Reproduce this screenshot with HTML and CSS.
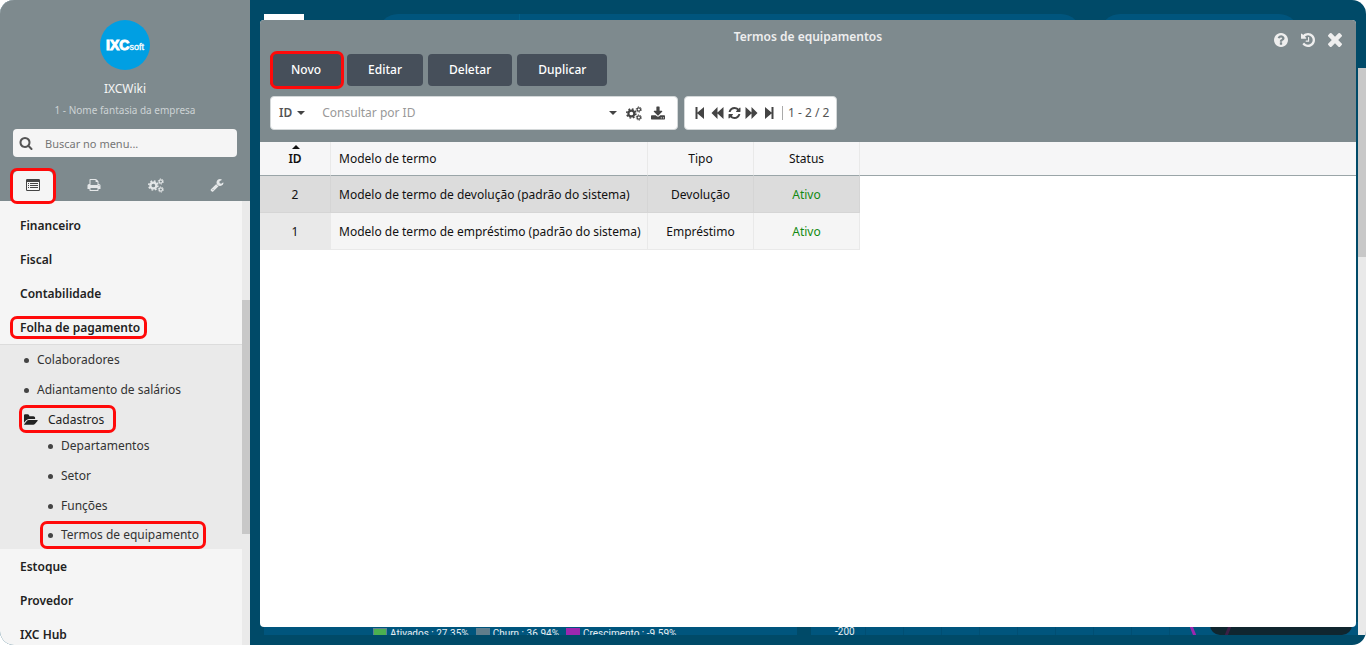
FILE: index.html
```html
<!DOCTYPE html>
<html lang="pt-BR">
<head>
<meta charset="utf-8">
<title>Termos de equipamentos</title>
<link rel="stylesheet" href="styles.css">
</head>
<body>
<svg class="sprite" aria-hidden="true">
  <symbol id="search" viewBox="0 0 1792 1792"><path d="M1216 832q0-185-131.500-316.500t-316.500-131.500-316.500 131.500-131.500 316.500 131.500 316.500 316.500 131.500 316.500-131.500 131.500-316.500zm512 832q0 52-38 90t-90 38q-54 0-90-38l-343-342q-179 124-399 124-143 0-273.500-55.500t-225-150-150-225-55.500-273.500 55.500-273.500 150-225 225-150 273.500-55.500 273.500 55.500 225 150 150 225 55.500 273.500q0 220-124 399l343 343q37 37 37 90z"/></symbol>
  <symbol id="list" viewBox="0 0 14 12"><path fill-rule="evenodd" d="M1.200 0h11.600Q14 0 14 1.200v9.600q0 1.200-1.200 1.200H1.200Q0 12 0 10.800V1.200Q0 0 1.200 0zM1 3v7.500q0 .5.500.500h11q.5 0 .5-.5V3z"/><path d="M2 4h1v1H2zM4 4h8v1H4zM2 6h1v1H2zM4 6h8v1H4zM2 8h1v1H2zM4 8h8v1H4z"/></symbol>
  <symbol id="print" viewBox="0 0 1792 1792"><path d="M448 1536h896v-256h-896v256zm0-640h896v-384h-160q-40 0-68-28t-28-68v-160h-640v640zm1152 64q0-26-19-45t-45-19-45 19-19 45 19 45 45 19 45-19 19-45zm128 0v416q0 13-9.500 22.500t-22.500 9.500h-224v160q0 40-28 68t-68 28h-960q-40 0-68-28t-28-68v-160h-224q-13 0-22.500-9.500t-9.500-22.500v-416q0-79 56.500-135.500t135.500-56.500h64v-544q0-40 28-68t68-28h672q40 0 88 20t76 48l152 152q28 28 48 76t20 88v256h64q79 0 135.500 56.500t56.500 135.500z"/></symbol>
  <symbol id="cogs" viewBox="0 0 30 28"><g fill="none" stroke="currentColor"><circle cx="10" cy="14" r="5.500" stroke-width="4"/><circle cx="10" cy="14" r="8.500" stroke-width="3" stroke-dasharray="3.340 3.340"/><circle cx="24" cy="6.500" r="3.200" stroke-width="2.200"/><circle cx="24" cy="6.500" r="4.900" stroke-width="1.800" stroke-dasharray="2.560 2.560"/><circle cx="24" cy="21.500" r="3.200" stroke-width="2.200"/><circle cx="24" cy="21.500" r="4.900" stroke-width="1.800" stroke-dasharray="2.560 2.560"/></g></symbol>
  <symbol id="wrench" viewBox="0 0 1792 1792"><path d="M448 1472q0-26-19-45t-45-19-45 19-19 45 19 45 45 19 45-19 19-45zm644-420l-682 682q-37 37-90 37-52 0-91-37l-106-108q-38-36-38-90 0-53 38-91l681-681q39 98 114.500 173.500t173.500 114.500zm634-435q0 39-23 106-47 134-164.500 217.500t-258.500 83.500q-185 0-316.500-131.500t-131.500-316.500 131.500-316.500 316.500-131.500q58 0 121.500 16.500t107.500 46.500q16 11 16 28t-16 28l-293 169v224l193 107q5-3 79-48.500t135.500-81 70.500-35.500q15 0 23.500 10t8.500 25z"/></symbol>
  <symbol id="folder" viewBox="0 128 1856 1536"><path d="M1815 952q0 31-31 66l-336 396q-43 51-120.500 86.500t-143.500 35.500h-1088q-34 0-60.500-13t-26.500-43q0-31 31-66l336-396q43-51 120.500-86.500t143.500-35.500h1088q34 0 60.500 13t26.500 43zm-343-344v160h-832q-94 0-197 47.500t-164 119.500l-337 396-5 6q0-4-.5-12.500t-.5-12.500v-960q0-92 66-158t158-66h320q92 0 158 66t66 158v32h544q92 0 158 66t66 158z"/></symbol>
  <symbol id="help" viewBox="128 128 1536 1536"><path d="M1024 1376v-192q0-14-9-23t-23-9h-192q-14 0-23 9t-9 23v192q0 14 9 23t23 9h192q14 0 23-9t9-23zm256-672q0-88-55.500-163t-138.500-116-170-41q-243 0-371 213-15 24 8 42l132 100q7 6 19 6 16 0 25-12 53-68 86-92 34-24 86-24 48 0 85.500 26t37.500 59q0 38-20 61t-68 45q-63 28-115.500 86.500t-52.500 125.500v36q0 14 9 23t23 9h192q14 0 23-9t9-23q0-19 21.500-49.500t54.500-49.500q32-18 49-28.500t46-35 44.500-48 28-60.500 12.500-81zm384 192q0 209-103 385.500t-279.500 279.500-385.500 103-385.500-103-279.500-279.500-103-385.500 103-385.500 279.500-279.500 385.500-103 385.500 103 279.500 279.500 103 385.500z"/></symbol>
  <symbol id="history" viewBox="128 128 1536 1536"><path d="M1664 896q0 156-61 298t-164 245-245 164-298 61q-172 0-327-72.500t-264-204.500q-7-10-6.500-22.500t8.500-20.500l137-138q10-9 25-9 16 2 23 12 73 95 179 147t225 52q104 0 198.500-40.500t163.500-109.500 109.500-163.500 40.500-198.500-40.500-198.500-109.500-163.500-163.500-109.500-198.500-40.500q-98 0-188 35.500t-160 101.500l137 138q31 30 14 69-17 40-59 40h-448q-26 0-45-19t-19-45v-448q0-42 40-59 39-17 69 14l130 129q107-101 244.500-156.500t284.500-55.500q156 0 298 61t245 164 164 245 61 298zm-640-288v448q0 14-9 23t-23 9h-320q-14 0-23-9t-9-23v-64q0-14 9-23t23-9h224v-352q0-14 9-23t23-9h64q14 0 23 9t9 23z"/></symbol>
  <symbol id="close" viewBox="302 366 1188 1188"><path d="M1490 1322q0 40-28 68l-136 136q-28 28-68 28t-68-28l-294-294-294 294q-28 28-68 28t-68-28l-136-136q-28-28-28-68t28-68l294-294-294-294q-28-28-28-68t28-68l136-136q28-28 68-28t68 28l294 294 294-294q28-28 68-28t68 28l136 136q28 28 28 68t-28 68l-294 294 294 294q28 28 28 68z"/></symbol>
  <symbol id="download" viewBox="64 0 1664 1536"><path d="M1344 1344q0-26-19-45t-45-19-45 19-19 45 19 45 45 19 45-19 19-45zm256 0q0-26-19-45t-45-19-45 19-19 45 19 45 45 19 45-19 19-45zm128-224v320q0 40-28 68t-68 28h-1472q-40 0-68-28t-28-68v-320q0-40 28-68t68-28h465l135 136q58 56 136 56t136-56l136-136h464q40 0 68 28t28 68zm-325-569q17 41-14 70l-448 448q-18 19-45 19t-45-19l-448-448q-31-29-14-70 17-39 59-39h256v-448q0-26 19-45t45-19h256q26 0 45 19t19 45v448h256q42 0 59 39z"/></symbol>
  <symbol id="refresh" viewBox="128 128 1536 1536"><path d="M1639 1056q0 5-1 7-64 268-268 434.500t-478 166.500q-146 0-282.500-55t-243.500-157l-129 129q-19 19-45 19t-45-19-19-45v-448q0-26 19-45t45-19h448q26 0 45 19t19 45-19 45l-137 137q71 66 161 102t187 36q134 0 250-65t186-179q11-17 53-117 8-23 30-23h192q13 0 22.500 9.500t9.500 22.500zm25-800v448q0 26-19 45t-45 19h-448q-26 0-45-19t-19-45 19-45l138-138q-148-137-349-137-134 0-250 65t-186 179q-11 17-53 117-8 23-30 23h-199q-13 0-22.500-9.500t-9.500-22.500v-7q65-268 270-434.500t480-166.500q146 0 284 55.500t245 156.500l130-129q19-19 45-19t45 19 19 45z"/></symbol>
  <symbol id="first" viewBox="0 0 12 12"><path d="M1 0h2v5.500L9.500 0v12L3 6.500V12H1z"/></symbol>
  <symbol id="back" viewBox="0 0 12 12"><path d="M0 6 6 0v5.500L12 0v12L6 6.500V12z"/></symbol>
</svg>

<div class="app">
  <aside class="sidebar">
    <header class="profile">
      <div class="logo"><b>IXC</b><span>soft</span></div>
      <div class="user">IXCWiki</div>
      <div class="company">1 - Nome fantasia da empresa</div>
      <label class="menu-search">
        <svg class="icon"><use href="#search"/></svg>
        <input type="search" placeholder="Buscar no menu..." aria-label="Buscar no menu">
      </label>
      <nav class="tabs">
        <button class="tab active marked" aria-label="Menu"><svg class="icon wide"><use href="#list"/></svg></button>
        <button class="tab" aria-label="Imprimir"><svg class="icon"><use href="#print"/></svg></button>
        <button class="tab" aria-label="Configurações"><svg class="icon cogs"><use href="#cogs"/></svg></button>
        <button class="tab" aria-label="Ferramentas"><svg class="icon"><use href="#wrench"/></svg></button>
      </nav>
    </header>
    <div class="menu-area">
      <ul class="menu">
        <li><a href="#">Financeiro</a></li>
        <li><a href="#">Fiscal</a></li>
        <li><a href="#">Contabilidade</a></li>
        <li><a href="#"><span class="marked mark-section">Folha de pagamento</span></a>
          <ul class="submenu">
            <li><a href="#">Colaboradores</a></li>
            <li><a href="#">Adiantamento de salários</a></li>
            <li><a href="#" class="folder"><span class="marked mark-folder"><svg class="icon wide"><use href="#folder"/></svg>Cadastros</span></a>
              <ul class="nested">
                <li><a href="#">Departamentos</a></li>
                <li><a href="#">Setor</a></li>
                <li><a href="#">Funções</a></li>
                <li><a href="#"><span class="marked mark-item">Termos de equipamento</span></a></li>
              </ul>
            </li>
          </ul>
        </li>
        <li><a href="#">Estoque</a></li>
        <li><a href="#">Provedor</a></li>
        <li><a href="#">IXC Hub</a></li>
      </ul>
      <div class="scrollbar"><div class="thumb"></div></div>
    </div>
  </aside>

  <main class="desktop">
    <div class="dashboard">
      <div class="dash-top">
        <div class="tile-white"></div>
        <div class="pill pill-wide"><i></i></div>
        <div class="pill pill-small"></div>
      </div>
      <div class="dash-bottom">
        <div class="panel legend">
          <span><i class="green"></i>Ativados : 27.35%</span>
          <span><i class="gray"></i>Churn : 36.94%</span>
          <span><i class="purple"></i>Crescimento : -9.59%</span>
        </div>
        <div class="panel chart">
          <span class="axis">-200</span>
          <div class="grid"></div>
          <svg class="line" viewBox="0 0 8 10"><path d="M1 0 5 10" stroke="#9c27b0" stroke-width="3"/></svg>
          <div class="tooltip"><svg class="line" viewBox="0 0 8 10"><path d="M6 0 2 10" stroke="#3c1f45" stroke-width="3"/></svg></div>
        </div>
      </div>
    </div>
    <div class="page-scroll"><div class="page-thumb"></div></div>

    <section class="window">
      <header class="window-head">
        <div class="title-row">
          <h1>Termos de equipamentos</h1>
          <div class="window-tools">
            <button aria-label="Ajuda"><svg class="icon"><use href="#help"/></svg></button>
            <button aria-label="Histórico"><svg class="icon"><use href="#history"/></svg></button>
            <button aria-label="Fechar"><svg class="icon"><use href="#close"/></svg></button>
          </div>
        </div>
        <div class="actions">
          <button class="marked mark-action">Novo</button>
          <button>Editar</button>
          <button>Deletar</button>
          <button>Duplicar</button>
        </div>
        <div class="toolbar">
          <div class="box filter">
            <button class="field">ID<i class="caret"></i></button>
            <input type="text" placeholder="Consultar por ID" aria-label="Consultar por ID">
            <button aria-label="Opções"><i class="caret"></i></button>
            <button aria-label="Configurar"><svg class="icon cogs"><use href="#cogs"/></svg></button>
            <button aria-label="Exportar"><svg class="icon"><use href="#download"/></svg></button>
          </div>
          <div class="box pager">
            <button aria-label="Primeira"><svg class="icon"><use href="#first"/></svg></button>
            <button aria-label="Anterior"><svg class="icon"><use href="#back"/></svg></button>
            <button aria-label="Atualizar"><svg class="icon"><use href="#refresh"/></svg></button>
            <button aria-label="Próxima"><svg class="icon flip"><use href="#back"/></svg></button>
            <button aria-label="Última"><svg class="icon flip"><use href="#first"/></svg></button>
            <span class="count">1 - 2 / 2</span>
          </div>
        </div>
      </header>
      <table>
        <colgroup><col class="c-id"><col class="c-model"><col class="c-type"><col class="c-status"><col></colgroup>
        <thead>
          <tr><th class="sorted">ID</th><th class="left">Modelo de termo</th><th>Tipo</th><th>Status</th><th class="fill"></th></tr>
        </thead>
        <tbody>
          <tr class="selected"><td>2</td><td class="left">Modelo de termo de devolução (padrão do sistema)</td><td>Devolução</td><td class="ok">Ativo</td><td class="fill"></td></tr>
          <tr><td>1</td><td class="left">Modelo de termo de empréstimo (padrão do sistema)</td><td>Empréstimo</td><td class="ok">Ativo</td><td class="fill"></td></tr>
        </tbody>
      </table>
    </section>
  </main>
</div>
</body>
</html>
```
FILE: styles.css
```css
* { box-sizing: border-box; }
body { margin: 0; background: #fff; font: 12px/18px "Noto Sans", sans-serif; color: #222; }
button, input { font: inherit; color: inherit; border: 0; padding: 0; margin: 0; background: none; outline: 0; }
button { cursor: pointer; }
ul { list-style: none; margin: 0; padding: 0; }
a { color: inherit; text-decoration: none; }
.sprite { display: none; }
.icon { display: block; width: 14px; height: 14px; fill: currentColor; flex: none; }
.icon.wide { width: 14px; height: 12px; }
.icon.cogs { width: 16px; height: 15px; }
.icon.flip { transform: scaleX(-1); }

.app { display: flex; height: 100vh; overflow: hidden; border-radius: 14px; background: #004a68; }

/* Red highlight frames */
.marked { position: relative; }
.marked::after { content: ""; position: absolute; inset: -3px; border: 3px solid #ff0a0a; border-radius: 7px; pointer-events: none; }
.marked.mark-section::after { inset: -3px -7px -3px -10px; }
.marked.mark-folder::after { inset: -6px -12px -4px -5px; }
.marked.mark-item::after { inset: -5px -7px -5px -21px; }
.marked.mark-action::after { inset: -3px -2px -3px 0; }

/* Sidebar */
.sidebar { width: 250px; flex: none; display: flex; flex-direction: column; background: #f5f5f5; }
.profile { background: #7e8a8e; padding-top: 20px; text-align: center; color: #f5f5f5; flex: none; }
.logo { width: 50px; height: 50px; margin: 0 auto; border-radius: 50%; background: #009fe3; color: #fff; display: flex; align-items: baseline; justify-content: center; line-height: 50px; font-family: "Liberation Sans", Arial, sans-serif; }
.logo b { font-size: 14px; -webkit-text-stroke: 1px #fff; }
.logo span { font-size: 9px; -webkit-text-stroke: 0.3px #fff; }
.user { margin-top: 10px; }
.company { margin-top: 4px; font-size: 10px; line-height: 16px; color: #cdd3d5; }
.menu-search { display: flex; align-items: center; gap: 12px; height: 28px; margin: 11px 13px 0; padding: 0 6px; border-radius: 4px; background: #f5f5f5; color: #555; }
.menu-search input { flex: 1; min-width: 0; font-size: 11px; padding-top: 2px; }
.menu-search input::placeholder { color: #757575; }
.tabs { display: grid; grid-template-columns: repeat(4, 1fr); justify-items: center; margin-top: 14px; padding: 0 2px; height: 30px; }
.tab { display: grid; place-items: center; width: 40px; height: 30px; padding-bottom: 2px; color: #e4e7e8; }
.tab.active { background: #f5f5f5; color: #444; border-radius: 5px 5px 0 0; z-index: 1; }
.menu-area { display: flex; flex: 1; min-height: 0; }
.menu { flex: 1; padding-top: 7px; overflow: hidden; }
.menu > li > a { display: block; padding: 9px 20px 7px; font-weight: 600; }
.submenu { background: #eaeaea; border-top: 1px solid #dcdcdc; font-weight: 400; color: #333; }
.submenu a { display: flex; align-items: center; height: 30px; padding-left: 24px; }
.submenu a::before { content: ""; width: 5px; height: 5px; margin-right: 8px; border-radius: 50%; background: #444; }
.submenu .folder { height: 26px; padding-top: 4px; color: #222; }
.submenu .folder::before { display: none; }
.submenu .folder span { display: flex; align-items: center; gap: 10px; }
.submenu .nested a { padding-left: 48px; }
.submenu .nested li:last-child a { height: 28px; }
.scrollbar { width: 8px; background: #eaeaea; padding-top: 99px; }
.thumb { height: 234px; background: #c8c8c8; }

/* Desktop behind the window */
.desktop { position: relative; flex: 1; min-width: 0; display: flex; }
.dashboard { flex: 1; min-width: 0; display: flex; flex-direction: column; justify-content: space-between; padding: 14px 0 10px 14px; }
.dash-top { display: flex; height: 40px; }
.tile-white { width: 40px; background: #fff; }
.pill { background: #00557d; border-radius: 20px; }
.pill-wide { flex: 1; margin-left: 74px; }
.pill-wide i { display: block; width: 142px; height: 40px; border-right: 1px solid #006089; }
.pill-small { width: 199px; margin: 0 59px 0 19px; }
.dash-bottom { display: flex; gap: 14px; height: 13px; font: 10px/12px Roboto, sans-serif; color: #e8eef1; }
.panel { background: #00557d; overflow: hidden; }
.legend { width: 533px; display: flex; gap: 7px; padding: 6px 0 0 109px; white-space: nowrap; }
.legend span { display: flex; gap: 3px; }
.legend i { width: 14px; height: 12px; border: 1px solid #5c7f92; }
.legend .green { background: #4caf50; }
.legend .gray { background: #607d8b; }
.legend .purple { background: #9c27b0; border-color: #9c27b0; }
.chart { flex: 1; display: flex; padding-left: 24px; }
.axis { width: 30px; padding-top: 4px; }
.grid { flex: 1; background: repeating-linear-gradient(90deg, #004e73 0 1px, transparent 1px 38px); }
.line { width: 8px; height: 10px; margin-top: 4px; fill: none; }
.tooltip { width: 142px; margin: 0 6px 0 12px; padding-left: 14px; background: #10262f; border-radius: 0 0 10px 10px; }
.page-scroll { width: 8px; margin: 68px 0 10px; background: #e9e9e9; }
.page-thumb { height: 189px; background: #c8c8c8; }

/* Window */
.window { position: absolute; inset: 20px 10px 18px; background: #fff; border-radius: 4px; overflow: hidden; }
.window-head { background: #7e8a8e; padding: 0 10px 12px; }
.title-row { display: grid; grid-template-columns: 1fr auto 1fr; height: 34px; }
.title-row h1 { grid-column: 2; margin: 0; font-size: 12px; line-height: 34px; font-weight: 600; color: #eee; }
.window-tools { display: flex; justify-content: flex-end; align-items: center; gap: 13px; padding: 6px 4px 0 0; color: #eee; }
.actions { display: flex; gap: 5px; }
.actions button { height: 32px; padding: 0 21px; border-radius: 4px; background: #464f5a; color: #fff; font-weight: 500; }
.toolbar { display: flex; gap: 6px; margin-top: 10px; }
.box { display: flex; align-items: center; height: 34px; background: #fff; border: 1px solid #d4d8d9; border-radius: 4px; color: #444; }
.filter { width: 408px; padding: 0 12px 0 8px; gap: 9px; }
.field { display: flex; align-items: center; gap: 5px; font-weight: 600; color: #555; }
.caret { display: block; border: 4px solid transparent; border-top-color: #444; border-bottom: 0; }
.filter input { flex: 1; min-width: 0; padding-left: 8px; }
.filter input::placeholder { color: #999; }
.pager { padding: 0 7px 0 9px; gap: 4px; }
.pager .icon { width: 13px; height: 12px; }
.count { border-left: 1px solid #aaa; padding-left: 5px; margin-left: 3px; line-height: 14px; color: #555; }

/* Records */
table { width: 100%; table-layout: fixed; border-collapse: separate; border-spacing: 0; color: #111; }
.c-id { width: 71px; }
.c-model { width: 317px; }
.c-type, .c-status { width: 106px; }
th, td { padding: 0; text-align: center; white-space: nowrap; border-right: 1px solid #e9e9e9; }
th { position: relative; height: 34px; background: #f6f6f7; border-bottom: 1px solid #9aa5a8; font-weight: 400; }
th.sorted { font-weight: 600; }
th.sorted::before { content: ""; position: absolute; top: 3px; left: 32px; border: 4px solid transparent; border-bottom-color: #111; border-top: 0; }
td { height: 37px; padding-top: 2px; background: #f5f5f5; border-bottom: 1px solid #e9e9e9; }
td:first-child { background: #e9e9e9; }
.selected td { background: #dcdcdc; border-color: #d5d5d5; }
.left { text-align: left; padding-left: 8px; }
td.ok { color: #128a12; }
td.fill, .selected td.fill { background: #fff; border: 0; }
th.fill { border-right: 0; }
```
